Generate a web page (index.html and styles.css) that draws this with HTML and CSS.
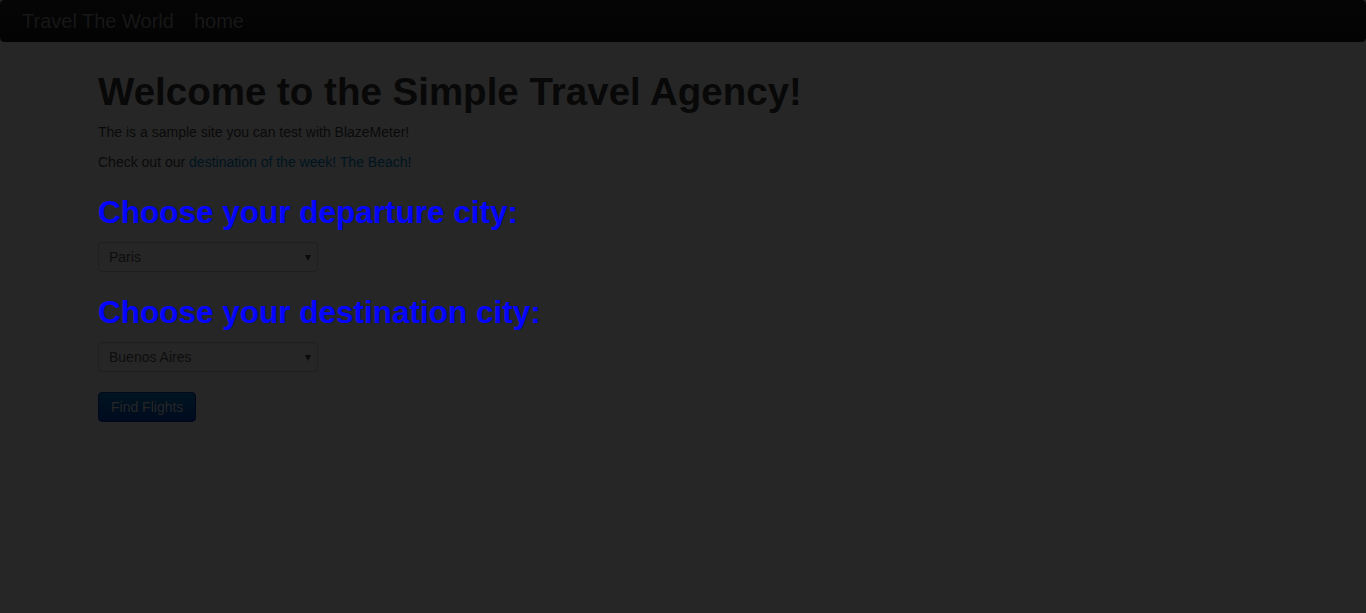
FILE: index.html
```html
<!DOCTYPE html>
<html lang="en">
<head>
<meta charset="utf-8">
<title>BlazeDemo</title>
<link rel="stylesheet" href="styles.css">
</head>
<body>
<div class="navbar">
  <a class="brand" href="#">Travel The World</a>
  <a class="nav-link" href="#">home</a>
</div>
<div class="container">
  <h1 class="title">Welcome to the Simple Travel Agency!</h1>
  <p class="text">The is a sample site you can test with BlazeMeter!</p>
  <p class="text">Check out our <a class="link" href="#">destination of the week! The Beach!</a></p>
  <form class="form">
    <h2 class="city-title">Choose your departure city:</h2>
    <div class="select-wrap">
      <select class="select" name="fromPort">
        <option>Paris</option>
        <option>Philadelphia</option>
        <option>Boston</option>
      </select>
    </div>
    <h2 class="city-title">Choose your destination city:</h2>
    <div class="select-wrap">
      <select class="select" name="toPort">
        <option>Buenos Aires</option>
        <option>Rome</option>
        <option>London</option>
      </select>
    </div>
    <div class="actions">
      <button class="btn" type="button">Find Flights</button>
    </div>
  </form>
</div>
</body>
</html>
```
FILE: styles.css
```css
html, body {
  margin: 0;
  padding: 0;
}
body {
  background: #262626;
  font-family: "Liberation Sans", Arial, Helvetica, sans-serif;
  font-size: 14px;
  line-height: 20px;
  color: #0a0a0a;
  height: 613px;
  overflow: hidden;
}
.navbar {
  height: 40px;
  border: 1px solid #040404;
  border-radius: 4px;
  background: linear-gradient(#050505, #030303);
  display: flex;
  align-items: center;
  padding-left: 21px;
  margin-bottom: 20px;
}
.brand {
  font-size: 20px;
  line-height: 20px;
  color: #171717;
  text-decoration: none;
  padding-right: 20px;
}
.nav-link {
  font-size: 20px;
  line-height: 20px;
  color: #171717;
  text-decoration: none;
}
.container {
  width: 1170px;
  margin: 0 auto;
  display: flow-root;
}
.title {
  font-size: 38.5px;
  line-height: 40px;
  font-weight: bold;
  margin: 10px 0;
  color: #080808;
}
.text {
  margin: 0 0 10px;
}
.link {
  color: #00141f;
  text-decoration: none;
}
.form {
  margin: 0;
  display: flow-root;
}
.city-title {
  font-size: 31.5px;
  line-height: 40px;
  font-weight: bold;
  margin: 10px 0;
  color: #0505ff;
}
.select-wrap {
  position: relative;
  width: 220px;
  height: 30px;
  margin-bottom: 20px;
}
.select-wrap::after {
  content: "";
  position: absolute;
  right: 7px;
  top: 13px;
  border-left: 3px solid transparent;
  border-right: 3px solid transparent;
  border-top: 6px solid #0a0a0a;
}
.select {
  appearance: none;
  -webkit-appearance: none;
  width: 220px;
  height: 30px;
  box-sizing: border-box;
  background: #262626;
  border: 1px solid #1f1f1f;
  border-radius: 4px;
  padding: 0 20px 0 10px;
  font-family: "Liberation Sans", Arial, sans-serif;
  font-size: 14px;
  color: #0d0d0d;
  margin: 0;
}
.actions {
  margin-top: 20px;
}
.btn {
  height: 30px;
  box-sizing: border-box;
  border: 1px solid #00081a;
  border-radius: 4px;
  background: linear-gradient(#00141f, #000a1f);
  color: #262626;
  font-family: "Liberation Sans", Arial, sans-serif;
  font-size: 14px;
  padding: 0 12px;
  white-space: nowrap;
  cursor: pointer;
}
```
